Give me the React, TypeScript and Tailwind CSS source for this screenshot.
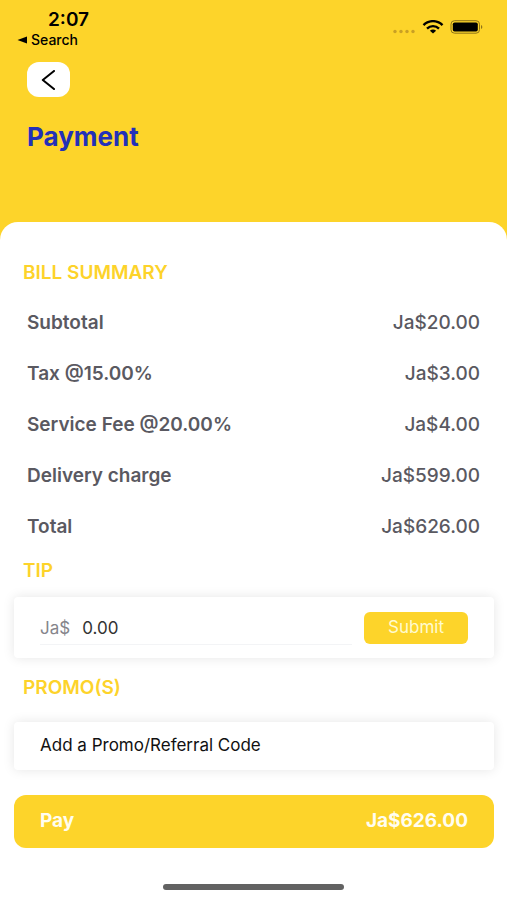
import { useState } from "react";

const charges = [
  { label: "Subtotal", amount: "Ja$20.00" },
  { label: "Tax @15.00%", amount: "Ja$3.00" },
  { label: "Service Fee @20.00%", amount: "Ja$4.00" },
  { label: "Delivery charge", amount: "Ja$599.00" },
  { label: "Total", amount: "Ja$626.00" },
];

function StatusBar() {
  return (
    <div className="flex items-start justify-between pt-2 pr-6 pl-4 text-black">
      <div>
        <div className="pl-8 text-[19px] leading-6 font-semibold">2:07</div>
        <a
          href="#search"
          className="flex items-center gap-1 text-[14px] leading-4 font-medium"
        >
          <svg width="11" height="8" viewBox="0 0 11 8" aria-hidden="true">
            <path d="M1.500 4 11 .4v7.200z" />
          </svg>
          Search
        </a>
      </div>
      <div className="flex items-center pt-3">
        <svg
          width="24"
          height="14"
          viewBox="0 0 24 14"
          fill="#c9a024"
          aria-hidden="true"
        >
          <circle cx="3" cy="11.500" r="1.700" />
          <circle cx="9" cy="11.500" r="1.700" />
          <circle cx="15" cy="11.500" r="1.700" />
          <circle cx="21" cy="11.500" r="1.700" />
        </svg>
        <svg
          className="mr-1.5 ml-1.5"
          width="22"
          height="14"
          viewBox="0 0 22 14"
          fill="none"
          stroke="black"
          strokeWidth="2.400"
          aria-hidden="true"
        >
          <path d="M1.500 5.200C6.800-.2 15.200-.2 20.500 5.200" />
          <path d="M5 8.600c3.400-3.300 8.600-3.300 12 0" />
          <path
            d="M11 13.500 7.900 10.800c1.800-1.700 4.400-1.700 6.200 0z"
            fill="black"
            stroke="none"
          />
        </svg>
        <svg width="33" height="14" viewBox="0 0 33 14" aria-hidden="true">
          <rect
            x="1"
            y="0.700"
            width="28.500"
            height="12.500"
            rx="3.500"
            fill="none"
            stroke="#8f7418"
          />
          <rect x="2.800" y="2.400" width="25" height="9.100" rx="1.800" />
          <path d="M31 5v4c1.800-.6 1.800-3.400 0-4z" fill="#8f7418" />
        </svg>
      </div>
    </div>
  );
}

function SectionTitle({ children }: { children: string }) {
  return (
    <h2 className="px-[23px] text-[19px] leading-6 font-semibold text-[#fdd32a]">
      {children}
    </h2>
  );
}

export default function App() {
  const [tip, setTip] = useState("0.00");

  return (
    <div className="flex min-h-screen flex-col bg-[#fdd42a] font-[Inter,'Liberation_Sans',sans-serif]">
      <header className="pb-[69px]">
        <StatusBar />
        <div className="px-[27px] pt-[14px]">
          <button
            type="button"
            aria-label="Back"
            className="flex h-[35px] w-[43px] items-center justify-center rounded-xl bg-white"
          >
            <svg
              width="16"
              height="20"
              viewBox="0 0 16 20"
              fill="none"
              stroke="black"
              strokeWidth="2"
              strokeLinecap="round"
              strokeLinejoin="round"
              aria-hidden="true"
            >
              <path d="M13 1 1.800 10 13 19" />
            </svg>
          </button>
          <h1 className="pt-6 text-[26px] leading-8 font-bold text-[#2330b8]">
            Payment
          </h1>
        </div>
      </header>

      <main className="flex-1 rounded-t-[18px] bg-white pt-[39px]">
        <SectionTitle>BILL SUMMARY</SectionTitle>
        <dl className="px-[27px] pt-[13px] pb-1.5 text-[19px] text-[#5a5961]">
          {charges.map((charge) => (
            <div
              key={charge.label}
              className="flex h-[51px] items-center justify-between"
            >
              <dt className="font-semibold">{charge.label}</dt>
              <dd className="font-medium">{charge.amount}</dd>
            </div>
          ))}
        </dl>

        <SectionTitle>TIP</SectionTitle>
        <form
          onSubmit={(e) => e.preventDefault()}
          className="mt-[14px] mr-[13px] ml-[14px] flex h-[61px] items-center gap-3 rounded-sm bg-white px-[26px] shadow-[0_0_12px_rgba(0,0,0,0.1)]"
        >
          <div className="flex flex-1 items-center gap-3 border-b border-gray-100 pt-1.5 pb-1 text-[17px] leading-6">
            <label htmlFor="tip" className="text-[#85858b]">
              Ja$
            </label>
            <input
              id="tip"
              inputMode="decimal"
              value={tip}
              onChange={(e) => setTip(e.target.value)}
              className="w-full min-w-0 bg-transparent text-[#333] outline-none"
            />
          </div>
          <button
            type="submit"
            className="h-8 w-[104px] rounded-md bg-[#fdd42a] text-[17px] text-[#fffbd0]"
          >
            Submit
          </button>
        </form>

        <div className="pt-[18px]">
          <SectionTitle>PROMO(S)</SectionTitle>
        </div>
        <div className="pt-[22px] pr-[13px] pb-9 pl-[14px]">
          <button
            type="button"
            className="h-12 w-full rounded-sm bg-white px-[26px] text-left text-[17px] text-[#111] shadow-[0_0_12px_rgba(0,0,0,0.1)]"
          >
            Add a Promo/Referral Code
          </button>
          <button
            type="button"
            className="mt-[25px] flex h-[53px] w-full items-center justify-between rounded-xl bg-[#fdd42a] px-[26px] text-[19px] font-bold text-[#fffdf0]"
          >
            <span>Pay</span>
            <span>Ja$626.00</span>
          </button>
        </div>
        <div className="flex justify-center pb-2">
          <div className="h-[6px] w-[181px] rounded-full bg-[#626262]" />
        </div>
      </main>
    </div>
  );
}
